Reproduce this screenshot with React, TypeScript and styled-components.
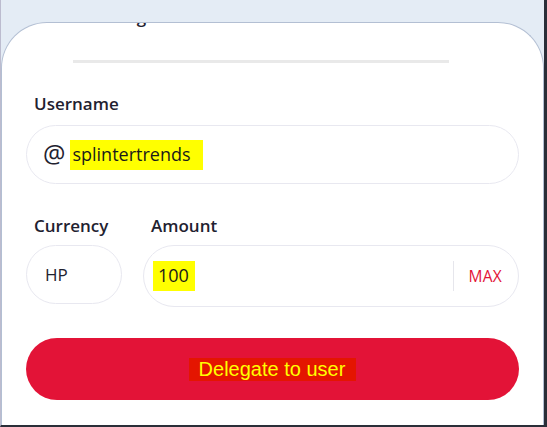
import React from "react";
import styled, { createGlobalStyle } from "styled-components";

const Global = createGlobalStyle`
  html, body { margin: 0; padding: 0; }
  body {
    background: #e4ecf5;
    font-family: "Open Sans", "Noto Sans", sans-serif;
  }
  * { box-sizing: border-box; }
`;

const Frame = styled.div`
  width: 547px;
  height: 427px;
  background: #e4ecf5;
  border-left: 1px solid #bcbccf;
  border-right: 3px solid #2a2e38;
  border-bottom: 2px solid #2a2e38;
  padding-top: 22px;
  overflow: hidden;
  display: flex;
  flex-direction: column;
`;

const Card = styled.div`
  flex: 1;
  background: #ffffff;
  border: 1px solid #b3bfd3;
  border-bottom: none;
  border-radius: 46px 46px 0 0;
  padding: 0 24px;
  overflow: hidden;
  display: flex;
  flex-direction: column;
`;

const Title = styled.div`
  margin-top: -17px;
  padding-left: 74px;
  height: 22px;
  font-size: 17px;
  font-weight: 600;
  color: #1f2230;
  line-height: 22px;
  white-space: nowrap;
`;

const Divider = styled.div`
  margin-top: 32px;
  margin-left: 47px;
  width: 376px;
  height: 3px;
  background: #e9e9e9;
`;

const Label = styled.div<{ $top?: number }>`
  margin-top: ${(p) => p.$top ?? 0}px;
  font-size: 17px;
  font-weight: 600;
  line-height: 22px;
  color: #1f2230;
  padding-left: 8px;
`;

const Pill = styled.div<{ $h: number }>`
  height: ${(p) => p.$h}px;
  border: 1px solid #e8e8f0;
  border-radius: 999px;
  display: flex;
  align-items: center;
  background: #fff;
`;

const UserField = styled(Pill)`
  margin-top: 10px;
  padding-left: 16px;
`;

const At = styled.span`
  font-size: 25px;
  color: #1f2230;
  line-height: 1;
  margin-right: 5px;
  margin-top: -2px;
`;

const Mark = styled.span<{ $pl: number; $pr: number; $fs: number }>`
  background: #ffff00;
  padding: 3px ${(p) => p.$pr}px 4px ${(p) => p.$pl}px;
  font-size: ${(p) => p.$fs}px;
  color: #1a1a1a;
  line-height: 23px;
`;

const Row = styled.div`
  display: flex;
  gap: 21px;
  margin-top: 31px;
`;

const Col = styled.div<{ $grow?: boolean; $w?: number }>`
  display: flex;
  flex-direction: column;
  gap: 8px;
  ${(p) => (p.$grow ? "flex: 1;" : `width: ${p.$w}px;`)}
`;

const CurrencyBox = styled(Pill)`
  padding-left: 18px;
  font-size: 17px;
  color: #1f2230;
`;

const AmountBox = styled(Pill)`
  padding-left: 9px;
  padding-right: 16px;
`;

const Spacer = styled.div`
  flex: 1;
`;

const VLine = styled.div`
  width: 1px;
  height: 30px;
  background: #e6e6ec;
  margin-right: 14px;
`;

const Max = styled.span`
  color: #e31337;
  font-size: 15.5px;
  letter-spacing: 0.3px;
`;

const Button = styled.button`
  margin-top: 31px;
  height: 62px;
  width: 100%;
  border: none;
  border-radius: 999px;
  background: #e31337;
  display: flex;
  align-items: center;
  justify-content: center;
  cursor: pointer;
  padding: 0;
`;

const ButtonText = styled.span`
  background: #e41500;
  color: #ffff00;
  font-family: "Liberation Sans", Arial, sans-serif;
  font-size: 20px;
  line-height: 23px;
  padding: 0 11px 0 10px;
`;

export default function App() {
  return (
    <>
      <Global />
      <Frame>
        <Card>
          <Title>Delegate Hive Power</Title>
          <Divider />
          <Label $top={30}>Username</Label>
          <UserField $h={59}>
            <At>@</At>
            <Mark $pl={2} $pr={12} $fs={18}>splintertrends</Mark>
          </UserField>
          <Row>
            <Col $w={96}>
              <Label>Currency</Label>
              <CurrencyBox $h={59}>HP</CurrencyBox>
            </Col>
            <Col $grow>
              <Label>Amount</Label>
              <AmountBox $h={62}>
                <Mark $pl={5} $pr={6} $fs={18}>100</Mark>
                <Spacer />
                <VLine />
                <Max>MAX</Max>
              </AmountBox>
            </Col>
          </Row>
          <Button>
            <ButtonText>Delegate to user</ButtonText>
          </Button>
        </Card>
      </Frame>
    </>
  );
}
